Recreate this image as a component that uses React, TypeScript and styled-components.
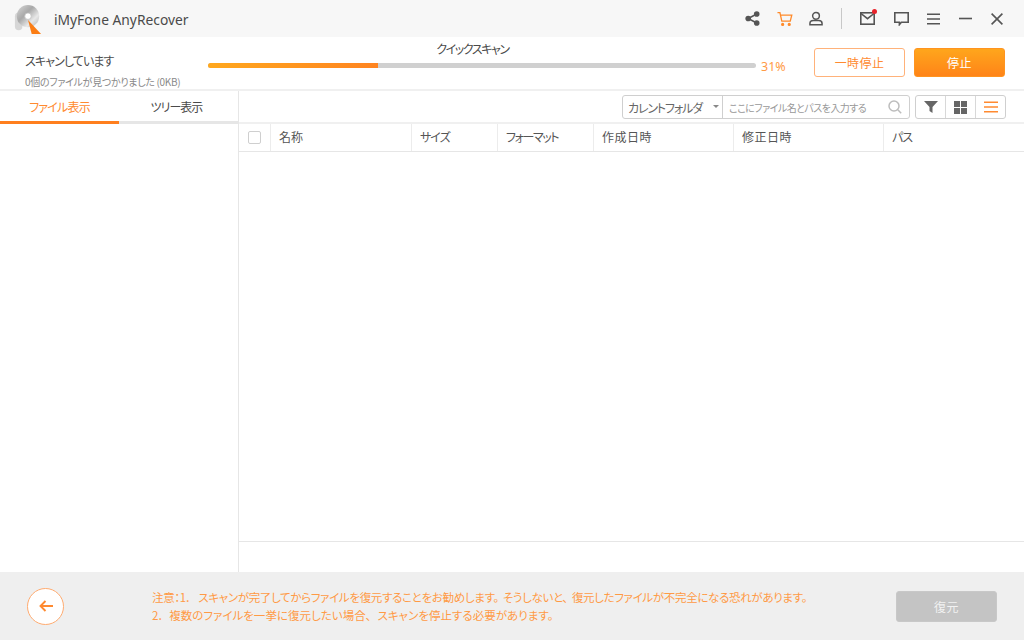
import React from 'react';
import styled, { createGlobalStyle } from 'styled-components';

const Global = createGlobalStyle`
  html, body { margin: 0; padding: 0; background: #fff; }
  body { font-family: "Noto Sans CJK JP", "Noto Sans", sans-serif; color: #4a4a4a; font-feature-settings: "palt" 1; }
  button { font-feature-settings: "palt" 1; }
  * { box-sizing: border-box; }
`;
const Page = styled.div`
  width: 1024px; height: 640px; display: flex; flex-direction: column; overflow: hidden; background: #fff;
`;
const TitleBar = styled.header`
  height: 37px; flex: none; background: #f7f7f7; display: flex; align-items: center; padding-left: 14px;
`;
const AppName = styled.span`
  font: 13.8px "Noto Sans", sans-serif; color: #4a4a4a; margin-left: 12px; position: relative; top: 1px;
`;
const TitleIcons = styled.div`
  margin-left: auto; display: flex; align-items: center; height: 100%;
`;
const IconSlot = styled.span<{ $w: number }>`
  width: ${p => p.$w}px; display: flex; justify-content: center; align-items: center; position: relative;
`;
const Divider = styled.span`
  width: 1px; height: 21px; background: #c8c8c8; margin: 0 8px 0 10px;
`;
const RedDot = styled.span`
  position: absolute; width: 5px; height: 5px; border-radius: 50%; background: #e8222a; top: -3px; right: 8px;
`;
const ScanBar = styled.section`
  height: 54px; flex: none; display: flex; border-bottom: 2px solid #f0f0f0;
`;
const ScanInfo = styled.div`
  width: 208px; flex: none; padding: 14px 0 0 25px;
`;
const ScanTitle = styled.div`
  font-size: 12px; line-height: 20px; letter-spacing: -0.9px;
`;
const ScanCount = styled.div`
  font-size: 10px; line-height: 14px; margin-top: 4px; color: #8a8a8a; letter-spacing: -0.31px;
`;
const ProgressCol = styled.div`
  width: 548px; flex: none; display: flex; flex-direction: column; align-items: center; padding-top: 3px;
`;
const ProgressLabel = styled.div`
  font-size: 12px; line-height: 18px; letter-spacing: -1.4px; margin-right: 19px;
`;
const Track = styled.div`
  width: 100%; height: 5px; border-radius: 3px; background: #d0d0d0; margin-top: 5px; overflow: hidden;
`;
const Fill = styled.div`
  height: 100%; background: linear-gradient(90deg, #ffa81e, #ff8420);
`;
const Percent = styled.div`
  font: 12.5px "Noto Sans", sans-serif; color: #ff9a45; margin: 21px 0 0 5px; width: 53px; line-height: 17px;
`;
const Btn = styled.button<{ $solid?: boolean }>`
  width: 91px; height: 29px; margin: 11px 9px 0 0; border-radius: 3px; font-family: inherit; font-size: 12px; padding: 0; letter-spacing: 0.4px;
  border: 1px solid ${p => (p.$solid ? '#ff9420' : '#ffb27a')};
  background: ${p => (p.$solid ? 'linear-gradient(180deg, #ffa61c, #ff8418)' : '#fff')};
  color: ${p => (p.$solid ? '#fff' : '#ff8a30')};
`;
const Main = styled.main`
  flex: 1; display: flex; min-height: 0;
`;
const Side = styled.aside`
  width: 239px; flex: none; border-right: 1px solid #e6e6e6;
`;
const Tabs = styled.div`
  display: flex; height: 33px; border-bottom: 3px solid #e6e6e6;
`;
const Tab = styled.div<{ $active?: boolean }>`
  width: 119px; height: 33px; text-align: center; font-size: 12px; line-height: 31px; letter-spacing: ${p => (p.$active ? '-0.8px' : '-1px')};
  padding-right: ${p => (p.$active ? 0 : 4)}px;
  color: ${p => (p.$active ? '#ff8a30' : '#4a4a4a')};
  border-bottom: 3px solid ${p => (p.$active ? '#ff7f1e' : 'transparent')};
`;
const Content = styled.div`
  flex: 1; display: flex; flex-direction: column; min-width: 0;
`;
const Toolbar = styled.div`
  height: 33px; flex: none; display: flex; justify-content: flex-end; align-items: flex-start; padding: 4px 18px 0 0; border-bottom: 2px solid #f0f0f0;
`;
const SearchGroup = styled.div`
  width: 288px; height: 24px; display: flex; border: 1px solid #cfcfcf; border-radius: 3px; background: #fff; margin-right: 5px;
`;
const Scope = styled.div`
  width: 100px; flex: none; border-right: 1px solid #cfcfcf; display: flex; align-items: center; padding-left: 5px; font-size: 12px; letter-spacing: -1.15px; color: #666; position: relative;
`;
const Caret = styled.span`
  position: absolute; right: 3px; top: 9px; border: 3.5px solid transparent; border-top-color: #888;
`;
const SearchField = styled.div`
  flex: 1; display: flex; align-items: center; justify-content: space-between; padding: 0 7px 0 6px; font-size: 10px; letter-spacing: -0.55px; color: #999;
`;
const ViewGroup = styled.div`
  width: 91px; height: 24px; display: flex; border: 1px solid #cfcfcf; border-radius: 3px;
`;
const ViewBtn = styled.div`
  flex: 1; display: flex; align-items: center; justify-content: center; & + & { border-left: 1px solid #d8d8d8; }
`;
const HeaderRow = styled.div`
  height: 28px; flex: none; display: flex; border-bottom: 1px solid #e6e6e6;
`;
const HeadCell = styled.div<{ $w: number; $ls: number }>`
  width: ${p => p.$w}px; flex: none; border-right: 1px solid #ececec; padding-left: 8px; font-size: 12px; line-height: 25px; color: #555; letter-spacing: ${p => p.$ls}px;
  &:last-child { border-right: none; flex: 1; }
`;
const CheckCell = styled.div`
  width: 32px; flex: none; border-right: 1px solid #ececec; display: flex; align-items: center; justify-content: center; padding-right: 1px;
`;
const Check = styled.span`
  width: 13px; height: 13px; border: 1px solid #cfcfcf; border-radius: 2px; display: block;
`;
const ListBody = styled.div`
  flex: 1; border-bottom: 1px solid #e6e6e6;
`;
const Spacer = styled.div`
  height: 30px; flex: none;
`;
const Footer = styled.footer`
  height: 68px; flex: none; background: #efefef; display: flex; align-items: center; padding-left: 27px;
`;
const BackBtn = styled.div`
  width: 37px; height: 37px; border-radius: 50%; border: 1px solid #ffab70; background: #fff; display: flex; align-items: center; justify-content: center; flex: none;
`;
const Notice = styled.div`
  margin-left: 88px; width: 708px; font-size: 11.5px; line-height: 18px; color: #ff9a45; white-space: nowrap;
`;
const NoticeLine = styled.div<{ $ls: number }>`
  letter-spacing: ${p => p.$ls}px;
`;
const Gap = styled.span<{ $w?: number }>`
  display: inline-block; width: ${p => p.$w ?? 4}px;
`;
const RestoreBtn = styled.button`
  width: 101px; height: 31px; margin-left: 36px; border: 1px solid #c8c8c8; border-radius: 3px; background: #c4c4c4; color: #f2f2f2; font-family: inherit; font-size: 12px; padding: 0; letter-spacing: 0.4px;
`;

const Logo = () => (
  <svg width="28" height="31" viewBox="0 0 30 33">
    <defs>
      <linearGradient id="disc" x1="0" y1="0" x2="1" y2="1">
        <stop offset="0" stopColor="#d8d8d8" />
        <stop offset="0.4" stopColor="#a8a8a8" />
        <stop offset="0.7" stopColor="#e8e8e8" />
        <stop offset="1" stopColor="#b0b0b0" />
      </linearGradient>
    </defs>
    <rect x="1" y="10" width="8" height="19" rx="4" fill="#d6d6d6" />
    <circle cx="15" cy="14" r="12" fill="url(#disc)" />
    <circle cx="15" cy="14" r="3.5" fill="#fff" stroke="#bbb" strokeWidth="0.8" />
    <path d="M15 18 L29 33 L19 33 Z" fill="#fb7d14" />
  </svg>
);
const stroke = { fill: 'none', stroke: '#555', strokeWidth: 1.6 };
const Share = () => (
  <svg width="15" height="15" viewBox="0 0 16 16" fill="#555">
    <circle cx="12.5" cy="3.2" r="3" /><circle cx="3.4" cy="8" r="3" /><circle cx="12.5" cy="12.8" r="3" />
    <path d="M3.4 8 12.5 3.2M3.4 8l9.1 4.8" stroke="#555" strokeWidth="1.6" />
  </svg>
);
const Cart = () => (
  <svg width="16" height="16" viewBox="0 0 17 16" fill="none" stroke="#ff8a2a" strokeWidth="1.4">
    <path d="M.5 1.2h2.6l2 9h9l1.6-6.4H3.8" /><circle cx="6" cy="13.8" r="1" fill="#ff8a2a" /><circle cx="13" cy="13.8" r="1" fill="#ff8a2a" />
  </svg>
);
const User = () => (
  <svg width="14" height="15" viewBox="0 0 15 15" {...stroke}>
    <circle cx="7.5" cy="4.6" r="3.6" /><path d="M1 14.2v-1.4c0-2 1.8-3.2 3.6-3.2h5.8c1.8 0 3.6 1.2 3.6 3.2v1.4Z" />
  </svg>
);
const Mail = () => (
  <svg width="15" height="13" viewBox="0 0 15 13" {...stroke}>
    <rect x=".8" y=".8" width="13.4" height="11.4" /><path d="M1 1.5l6.5 5.2L14 1.5" />
  </svg>
);
const Chat = () => (
  <svg width="15" height="14" viewBox="0 0 15 14" {...stroke}>
    <path d="M.8.8h13.4v9.4H7.4l-2 2.4v-2.4H.8Z" />
  </svg>
);
const Menu = ({ c = '#555', w = 13 }: { c?: string; w?: number }) => (
  <svg width={w} height="12" viewBox={`0 0 ${w} 12`} stroke={c} strokeWidth="1.6">
    <path d={`M0 1.2h${w}M0 6h${w}M0 10.8h${w}`} />
  </svg>
);
const Minus = () => (
  <svg width="13" height="3" viewBox="0 0 13 3" stroke="#555" strokeWidth="1.6"><path d="M0 1.5h13" /></svg>
);
const Close = () => (
  <svg width="12" height="12" viewBox="0 0 12 12" stroke="#555" strokeWidth="1.6"><path d="M.6.6l10.8 10.8M11.4.6.6 11.4" /></svg>
);
const Search = () => (
  <svg width="14" height="14" viewBox="0 0 14 14" fill="none" stroke="#bdbdbd" strokeWidth="1.5">
    <circle cx="6" cy="6" r="5" /><path d="M9.8 9.8l3.4 3.4" />
  </svg>
);
const Filter = () => (
  <svg width="14" height="12" viewBox="0 0 14 12" fill="#666"><path d="M0 0h14L8.5 6v6l-3-2V6Z" /></svg>
);
const Grid = () => (
  <svg width="13" height="13" viewBox="0 0 13 13" fill="#666">
    <rect width="6" height="6" /><rect x="7" width="6" height="6" /><rect y="7" width="6" height="6" /><rect x="7" y="7" width="6" height="6" />
  </svg>
);
const ArrowLeft = () => (
  <svg width="14" height="12" viewBox="0 0 14 12" fill="none" stroke="#ff8a30" strokeWidth="1.9">
    <path d="M14 6H1.5M6.5 1 1.5 6l5 5" />
  </svg>
);

const columns: [string, number, number][] = [
  ['名称', 141, 0], ['サイズ', 86, -1], ['フォーマット', 96, -1.4], ['作成日時', 140, 0.5], ['修正日時', 150, 0.5], ['パス', 0, -1],
];

export default function App() {
  return (
    <Page>
      <Global />
      <TitleBar>
        <Logo />
        <AppName>iMyFone AnyRecover</AppName>
        <TitleIcons>
          <IconSlot $w={36}><Share /></IconSlot>
          <IconSlot $w={30}><Cart /></IconSlot>
          <IconSlot $w={31}><User /></IconSlot>
          <Divider />
          <IconSlot $w={35}><Mail /><RedDot /></IconSlot>
          <IconSlot $w={32}><Chat /></IconSlot>
          <IconSlot $w={32}><Menu /></IconSlot>
          <IconSlot $w={32}><Minus /></IconSlot>
          <IconSlot $w={32}><Close /></IconSlot>
          <IconSlot $w={11} />
        </TitleIcons>
      </TitleBar>
      <ScanBar>
        <ScanInfo>
          <ScanTitle>スキャンしています</ScanTitle>
          <ScanCount>0個のファイルが見つかりました (0KB)</ScanCount>
        </ScanInfo>
        <ProgressCol>
          <ProgressLabel>クイックスキャン</ProgressLabel>
          <Track><Fill style={{ width: '31%' }} /></Track>
        </ProgressCol>
        <Percent>31%</Percent>
        <Btn>一時停止</Btn>
        <Btn $solid>停止</Btn>
      </ScanBar>
      <Main>
        <Side>
          <Tabs>
            <Tab $active>ファイル表示</Tab>
            <Tab>ツリー表示</Tab>
          </Tabs>
        </Side>
        <Content>
          <Toolbar>
            <SearchGroup>
              <Scope>カレントフォルダ<Caret /></Scope>
              <SearchField>ここにファイル名とパスを入力する<Search /></SearchField>
            </SearchGroup>
            <ViewGroup>
              <ViewBtn><Filter /></ViewBtn>
              <ViewBtn><Grid /></ViewBtn>
              <ViewBtn><Menu c="#ff8a30" w={14} /></ViewBtn>
            </ViewGroup>
          </Toolbar>
          <HeaderRow>
            <CheckCell><Check /></CheckCell>
            {columns.map(([name, w, ls]) => <HeadCell key={name} $w={w} $ls={ls}>{name}</HeadCell>)}
          </HeaderRow>
          <ListBody />
          <Spacer />
        </Content>
      </Main>
      <Footer>
        <BackBtn><ArrowLeft /></BackBtn>
        <Notice>
          <NoticeLine $ls={-0.32}>注意：1．<Gap $w={7} />スキャンが完了してからファイルを復元することをお勧めします。<Gap />そうしないと、<Gap />復元したファイルが不完全になる恐れがあります。</NoticeLine>
          <NoticeLine $ls={0.02}>2．<Gap $w={5} />複数のファイルを一挙に復元したい場合、<Gap $w={6} />スキャンを停止する必要があります。</NoticeLine>
        </Notice>
        <RestoreBtn>復元</RestoreBtn>
      </Footer>
    </Page>
  );
}
